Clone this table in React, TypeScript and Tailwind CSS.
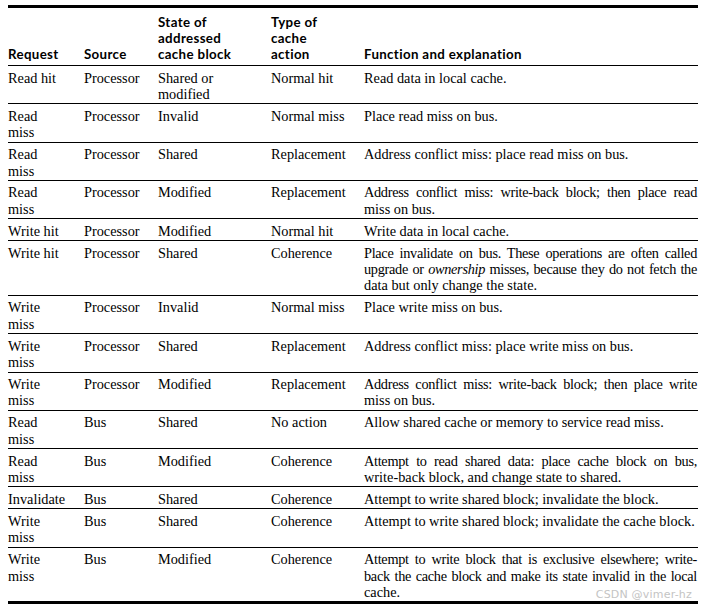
import React from "react";

type Row = {
  req: string[];
  src: string;
  state: string[];
  action: string;
  fn: React.ReactNode[];
};

const rows: Row[] = [
  { req: ["Read hit"], src: "Processor", state: ["Shared or", "modified"], action: "Normal hit", fn: ["Read data in local cache."] },
  { req: ["Read", "miss"], src: "Processor", state: ["Invalid"], action: "Normal miss", fn: ["Place read miss on bus."] },
  { req: ["Read", "miss"], src: "Processor", state: ["Shared"], action: "Replacement", fn: ["Address conflict miss: place read miss on bus."] },
  {
    req: ["Read", "miss"],
    src: "Processor",
    state: ["Modified"],
    action: "Replacement",
    fn: ["Address conflict miss: write-back block; then place read", "miss on bus."],
  },
  { req: ["Write hit"], src: "Processor", state: ["Modified"], action: "Normal hit", fn: ["Write data in local cache."] },
  {
    req: ["Write hit"],
    src: "Processor",
    state: ["Shared"],
    action: "Coherence",
    fn: [
      "Place invalidate on bus. These operations are often called",
      <>
        upgrade or <i>ownership</i> misses, because they do not fetch the
      </>,
      "data but only change the state.",
    ],
  },
  { req: ["Write", "miss"], src: "Processor", state: ["Invalid"], action: "Normal miss", fn: ["Place write miss on bus."] },
  { req: ["Write", "miss"], src: "Processor", state: ["Shared"], action: "Replacement", fn: ["Address conflict miss: place write miss on bus."] },
  {
    req: ["Write", "miss"],
    src: "Processor",
    state: ["Modified"],
    action: "Replacement",
    fn: ["Address conflict miss: write-back block; then place write", "miss on bus."],
  },
  { req: ["Read", "miss"], src: "Bus", state: ["Shared"], action: "No action", fn: ["Allow shared cache or memory to service read miss."] },
  {
    req: ["Read", "miss"],
    src: "Bus",
    state: ["Modified"],
    action: "Coherence",
    fn: ["Attempt to read shared data: place cache block on bus,", "write-back block, and change state to shared."],
  },
  { req: ["Invalidate"], src: "Bus", state: ["Shared"], action: "Coherence", fn: ["Attempt to write shared block; invalidate the block."] },
  { req: ["Write", "miss"], src: "Bus", state: ["Shared"], action: "Coherence", fn: ["Attempt to write shared block; invalidate the cache block."] },
  {
    req: ["Write", "miss"],
    src: "Bus",
    state: ["Modified"],
    action: "Coherence",
    fn: [
      "Attempt to write block that is exclusive elsewhere; write-",
      "back the cache block and make its state invalid in the local",
      "cache.",
    ],
  },
];

function Lines({ items, justify = false }: { items: React.ReactNode[]; justify?: boolean }) {
  return (
    <>
      {items.map((line, i) => (
        <div
          key={i}
          className={
            justify && i < items.length - 1
              ? "whitespace-nowrap tracking-[-0.3px] text-justify [text-align-last:justify]"
              : "whitespace-nowrap"
          }
        >
          {line}
        </div>
      ))}
    </>
  );
}

export default function App() {
  const head =
    "font-[family-name:Lato,sans-serif] font-bold text-[13.3px] leading-[16px] tracking-[0.35px] text-black";
  return (
    <div className="relative w-[702px] h-[609px] bg-white overflow-hidden">
      <div className="pt-[5px] pl-[8px] w-[698px]">
        <div className="border-t-[3px] border-b-[3px] border-black">
          {/* Header */}
          <div className={`flex items-end border-b border-black pt-[6px] pb-[3px] ${head}`}>
            <div className="w-[76px] shrink-0">Request</div>
            <div className="w-[74px] shrink-0">Source</div>
            <div className="w-[113px] shrink-0">
              State of
              <br />
              addressed
              <br />
              cache block
            </div>
            <div className="w-[93px] shrink-0">
              Type of
              <br />
              cache
              <br />
              action
            </div>
            <div className="flex-1 min-w-0">Function and explanation</div>
          </div>

          {/* Body */}
          {rows.map((r, i) => (
            <div
              key={i}
              className={`flex items-start pt-[3.5px] pb-[1px] font-[family-name:Liberation_Serif,serif] text-[14.3px] leading-[16.4px] text-black ${
                i < rows.length - 1 ? "border-b border-black" : ""
              }`}
            >
              <div className="w-[76px] shrink-0">
                <Lines items={r.req} />
              </div>
              <div className="w-[74px] shrink-0">{r.src}</div>
              <div className="w-[113px] shrink-0">
                <Lines items={r.state} />
              </div>
              <div className="w-[93px] shrink-0">{r.action}</div>
              <div className="flex-1 min-w-0 pr-[1px]">
                <Lines items={r.fn} justify />
              </div>
            </div>
          ))}
        </div>
      </div>
      <div className="absolute right-[10px] top-[588px] font-[family-name:DejaVu_Sans,sans-serif] text-[11px] leading-[14px] text-[#c4c4c4] tracking-[0.2px]">
        CSDN @vimer-hz
      </div>
    </div>
  );
}
